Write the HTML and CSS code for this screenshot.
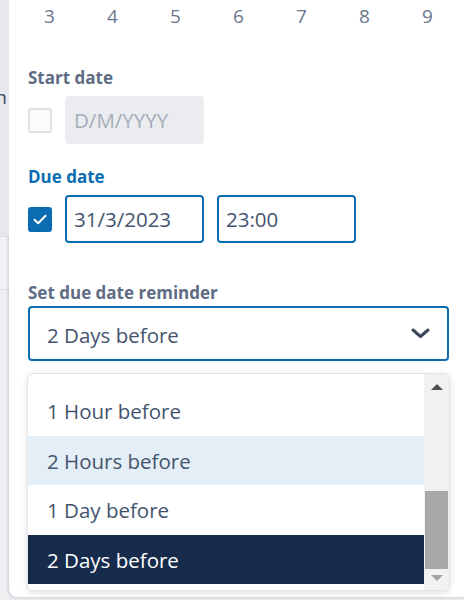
FILE: index.html
```html
<!DOCTYPE html>
<html>
<head>
<meta charset="utf-8">
<link rel="stylesheet" href="styles.css">
</head>
<body>
<div class="page">
  <div class="side">
    <div class="side-a"><span class="side-n">n</span></div>
    <div class="side-b"></div>
    <div class="side-c"></div>
  </div>
  <div class="popover">
    <div class="week">
      <span>3</span><span>4</span><span>5</span><span>6</span><span>7</span><span>8</span><span>9</span>
    </div>

    <div class="label label-start">Start date</div>
    <div class="row">
      <span class="check"></span>
      <div class="input input-disabled">D/M/YYYY</div>
    </div>

    <div class="label label-due">Due date</div>
    <div class="row">
      <span class="check check-on">
        <svg width="14" height="11" viewBox="0 0 14 11"><path d="M1.5 5.8 L5.2 9.2 L12.5 1.8" fill="none" stroke="#fff" stroke-width="2" stroke-linecap="round" stroke-linejoin="round"/></svg>
      </span>
      <div class="input input-active">31/3/2023</div>
      <div class="input input-active">23:00</div>
    </div>

    <div class="label label-reminder">Set due date reminder</div>
    <div class="select">
      <span>2 Days before</span>
      <svg class="chev" width="19" height="11" viewBox="0 0 19 11"><path d="M2 2 L9.5 8.5 L17 2" fill="none" stroke="#3b475a" stroke-width="3" stroke-linecap="round" stroke-linejoin="round"/></svg>
    </div>

    <div class="list">
      <div class="options">
        <div class="opt">1 Hour before</div>
        <div class="opt opt-hover">2 Hours before</div>
        <div class="opt">1 Day before</div>
        <div class="opt opt-selected">2 Days before</div>
      </div>
      <div class="scrollbar">
        <div class="arrow arrow-up"></div>
        <div class="track"><div class="thumb"></div></div>
        <div class="arrow arrow-down"></div>
      </div>
    </div>
  </div>
</div>
</body>
</html>
```

FILE: styles.css
```css
* { box-sizing: border-box; }
html, body {
  margin: 0;
  padding: 0;
  background: #e9ebee;
}
body {
  font-family: "Open Sans", "Noto Sans", sans-serif;
  color: #44546f;
}
.page {
  display: flex;
  width: 464px;
  height: 600px;
  overflow: hidden;
}
.side {
  width: 9px;
  flex: none;
  display: flex;
  flex-direction: column;
  background: #eceef1;
}
.side-a {
  height: 236px;
  background: #e6e8ec;
  position: relative;
  overflow: hidden;
}
.side-n {
  position: absolute;
  right: 2px;
  top: 84px;
  font-size: 19px;
  color: #3b475a;
}
.side-b {
  height: 54px;
  background: #f1f2f4;
  border-top: 1px solid #dcdfe4;
  border-bottom: 1px solid #dcdfe4;
}
.side-c {
  flex: 1;
  background: #eef0f2;
}
.popover {
  width: 455px;
  min-width: 0;
  flex: none;
  height: 597px;
  background: #fff;
  border-radius: 0 0 0 8px;
  box-shadow: -1px 0 3px rgba(9, 30, 66, 0.18);
  padding: 0 15px 0 19px;
  display: flex;
  flex-direction: column;
}
.week {
  display: grid;
  grid-template-columns: repeat(7, 63px);
  width: 441px;
  margin-left: -10px;
  height: 32px;
  line-height: 32px;
  font-size: 19px;
  color: #6b778c;
  text-align: center;
}
.label {
  font-size: 17px;
  font-weight: 700;
  line-height: 20px;
  color: #5e6c84;
}
.label-start { margin-top: 36px; }
.label-due { margin-top: 23px; color: #0a6db1; }
.label-reminder { margin-top: 40px; }
.row {
  display: flex;
  align-items: center;
  gap: 13px;
  margin-top: 8px;
  height: 48px;
}
.check {
  width: 24px;
  height: 25px;
  border: 2px solid #dfe1e6;
  background: #fafbfc;
  border-radius: 3px;
  display: flex;
  align-items: center;
  justify-content: center;
  flex: none;
}
.check-on {
  border-color: #0b6cb1;
  background: #0b6cb1;
}
.input {
  width: 139px;
  height: 48px;
  border-radius: 4px;
  font-size: 20.5px;
  line-height: 44px;
  padding-left: 7px;
  flex: none;
}
.input-disabled {
  background: #ebecf0;
  color: #a5adba;
  padding-left: 9px;
  line-height: 48px;
}
.input-active {
  border: 2px solid #0b6cb1;
  color: #44546f;
}
.select {
  margin-top: 3px;
  height: 55px;
  border: 2px solid #0b6cb1;
  border-radius: 4px;
  display: flex;
  align-items: center;
  justify-content: space-between;
  padding: 2px 17px 0 17px;
  font-size: 20.5px;
  color: #44546f;
}
.chev { margin-top: -2px; }
.list {
  margin-top: 12px;
  margin-left: -1px;
  width: 423px;
  height: 218px;
  border: 1px solid #e3e3e3;
  border-radius: 6px;
  box-shadow: 0 2px 6px rgba(0, 0, 0, 0.12);
  background: #fff;
  display: flex;
  overflow: hidden;
}
.options {
  flex: 1;
  padding-top: 12px;
}
.opt {
  height: 49.5px;
  line-height: 51px;
  padding-left: 19px;
  font-size: 20.5px;
  color: #44546f;
}
.opt-hover { background: #e4eef6; }
.opt-selected {
  background: #172b4d;
  color: #fff;
}
.scrollbar {
  width: 25px;
  flex: none;
  background: #f1f1f1;
  display: flex;
  flex-direction: column;
  align-items: center;
  padding: 0 1px;
}
.arrow {
  width: 0;
  height: 0;
  border-left: 6px solid transparent;
  border-right: 6px solid transparent;
  flex: none;
}
.arrow-up {
  margin-top: 10px;
  border-bottom: 6px solid #505050;
}
.track {
  flex: 1;
  width: 100%;
  display: flex;
  flex-direction: column;
  justify-content: flex-end;
  padding-bottom: 6px;
}
.thumb {
  height: 78px;
  background: #a8a8a8;
  width: 100%;
}
.arrow-down {
  margin-bottom: 9px;
  border-top: 6px solid #a3a3a3;
}
```
